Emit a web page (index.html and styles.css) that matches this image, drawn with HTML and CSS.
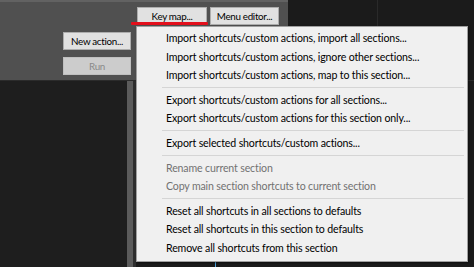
FILE: index.html
```html
<!DOCTYPE html>
<html>
<head>
<meta charset="utf-8">
<link rel="stylesheet" href="styles.css">
</head>
<body>
<div class="app">
  <div class="top">
    <div class="panel">
      <div class="row-buttons">
        <button class="btn btn-keymap">Key map...</button>
        <button class="btn btn-menued">Menu editor...</button>
      </div>
      <div class="col-buttons">
        <button class="btn btn-wide">New action...</button>
        <button class="btn btn-wide" disabled>Run</button>
      </div>
    </div>
    <div class="top-dark"><div class="divider"></div></div>
  </div>
  <div class="bottom">
    <div class="list"></div>
    <div class="scroll"></div>
    <div class="gutter"></div>
    <div class="canvas"><div class="cursor"></div></div>
  </div>
</div>
<div class="annot"></div>
<div class="menu">
  <div class="item">Import shortcuts/custom actions, import all sections...</div>
  <div class="item">Import shortcuts/custom actions, ignore other sections...</div>
  <div class="item">Import shortcuts/custom actions, map to this section...</div>
  <div class="sep"></div>
  <div class="item">Export shortcuts/custom actions for all sections...</div>
  <div class="item">Export shortcuts/custom actions for this section only...</div>
  <div class="sep"></div>
  <div class="item">Export selected shortcuts/custom actions...</div>
  <div class="sep"></div>
  <div class="item disabled">Rename current section</div>
  <div class="item disabled">Copy main section shortcuts to current section</div>
  <div class="sep"></div>
  <div class="item">Reset all shortcuts in all sections to defaults</div>
  <div class="item">Reset all shortcuts in this section to defaults</div>
  <div class="item">Remove all shortcuts from this section</div>
</div>
</body>
</html>
```
FILE: styles.css
```css
html, body {
  margin: 0;
  padding: 0;
}
body {
  width: 474px;
  height: 267px;
  overflow: hidden;
  background: #1d1d1d;
  font-family: Lato, "Noto Sans", sans-serif;
  position: relative;
}
.app {
  display: flex;
  flex-direction: column;
  height: 267px;
}
.top {
  display: flex;
  height: 80px;
}
.panel {
  width: 288px;
  background: #505050;
  border-top: 2px solid #626262;
  box-sizing: border-box;
  display: flex;
  flex-direction: column;
  padding-top: 5px;
}
.row-buttons {
  display: flex;
  gap: 3px;
  padding-left: 137px;
}
.col-buttons {
  display: flex;
  flex-direction: column;
  gap: 7px;
  padding-left: 63px;
  margin-top: 7px;
}
.btn {
  font-family: Lato, "Noto Sans", sans-serif;
  font-size: 9.8px;
  letter-spacing: -0.3px;
  white-space: nowrap;
  height: 18px;
  padding: 0;
  margin: 0;
  background: #e1e1e1;
  border: 1px solid #adadad;
  color: #000;
  line-height: 15px;
  box-sizing: border-box;
  overflow: hidden;
}
.btn-keymap { width: 70px; }
.btn-menued { width: 69px; }
.btn-wide { width: 68px; }
.btn:disabled {
  background: #cccccc;
  border-color: #bfbfbf;
  color: #8a8a8a;
}
.top-dark {
  flex: 1;
  background: #1b1b1b;
  display: flex;
  padding-left: 89px;
}
.divider {
  width: 1px;
  background: #2a2a2a;
}
.bottom {
  display: flex;
  flex: 1;
  border-top: 1px solid #2b2b2b;
}
.list {
  width: 127px;
  background: #1e1e1e;
}
.scroll {
  width: 6px;
  background: #5b5b5b;
}
.gutter {
  width: 3px;
  background: #2e2e2e;
}
.canvas {
  flex: 1;
  background: #1b1b1b;
  padding-left: 79px;
  display: flex;
}
.cursor {
  width: 1px;
  background: #4ea6e0;
}
.annot {
  position: absolute;
  left: 131px;
  top: 22px;
  width: 77px;
  height: 3px;
  background: #e3101c;
  border-radius: 1px;
}
.menu {
  position: absolute;
  left: 136px;
  top: 26px;
  width: 332px;
  box-sizing: border-box;
  background: #f0f0f0;
  border: 1px solid #a0a0a0;
  box-shadow: 1px 1px 2px rgba(0,0,0,0.5);
  padding: 2px 2px 3px 2px;
  font-size: 10.6px;
  letter-spacing: -0.15px;
  color: #000;
}
.item {
  height: 18.6px;
  line-height: 18.6px;
  padding-left: 27px;
  white-space: nowrap;
}
.item.disabled {
  color: #727272;
}
.sep {
  height: 1px;
  background: #d5d5d5;
  margin: 2.5px 1px 2.5px 23px;
}
```
